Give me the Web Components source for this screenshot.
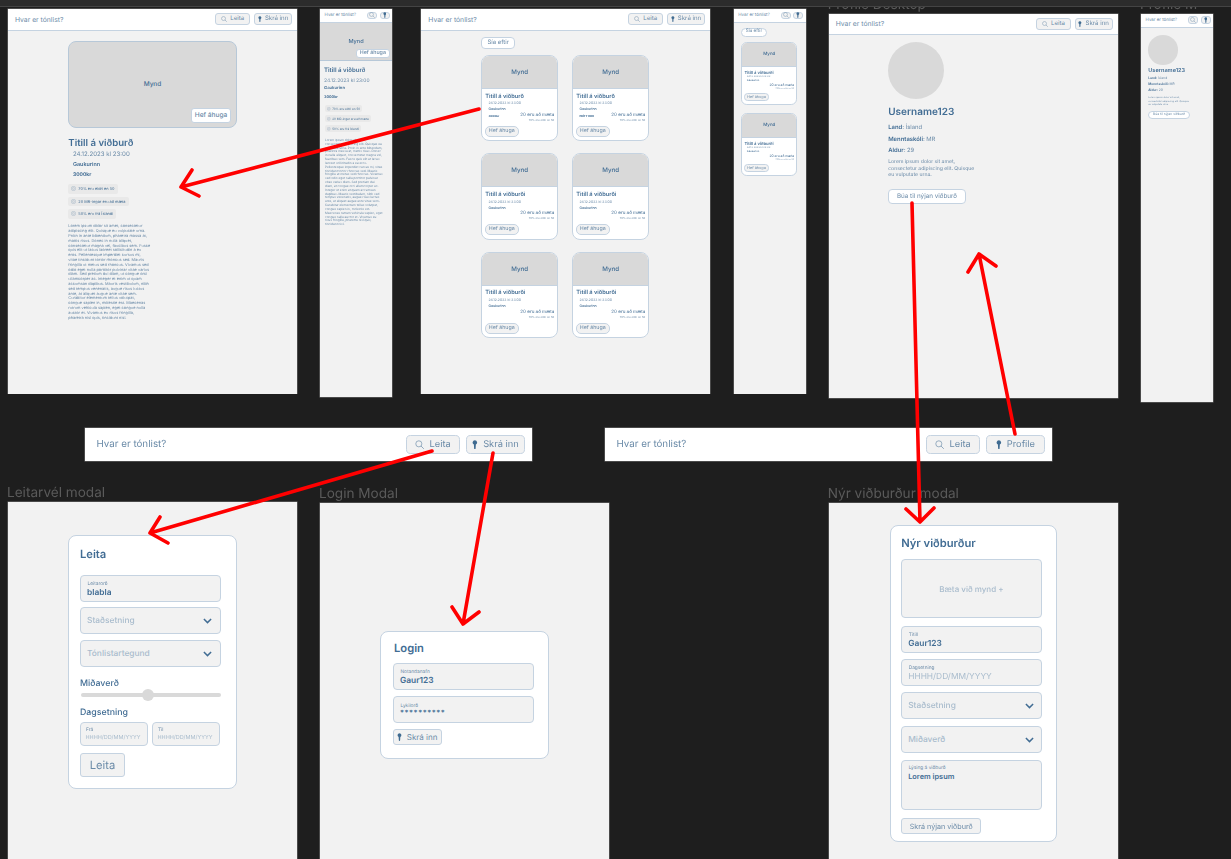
<!DOCTYPE html>
<html lang="is"><head><meta charset="utf-8"><title>Hvar er tónlist?</title>
<style>html,body{margin:0;padding:0;height:859px;overflow:hidden;background:#1e1e1e}</style></head>
<body>
<app-canvas>
  <ui-frame x="8" y="9" w="289" h="384.5"><ui-nav login></ui-nav><event-detail></event-detail></ui-frame>
  <ui-frame x="320" y="9" w="72" h="388"><ui-nav compact></ui-nav><event-detail mobile></event-detail></ui-frame>

  <ui-frame x="421.3" y="9" w="288.7" h="384.5"><ui-nav login></ui-nav>
    <event-grid>
      <event-card title-text="Titill á viðburð" date="24.12.2023 kl 23:00" price="3000kr"></event-card>
      <event-card title-text="Titill á viðburð" date="24.12.2023 kl 23:00" price="FRÍTT INN"></event-card>
      <event-card title-text="Titill á viðburði" date="24.12.2023 kl 23:00"></event-card>
      <event-card title-text="Titill á viðburði" date="24.12.2023 kl 23:00"></event-card>
      <event-card title-text="Titill á viðburði" date="24.12.2023 kl 23:00"></event-card>
      <event-card title-text="Titill á viðburði" date="24.12.2023 kl 23:00"></event-card>
    </event-grid>
  </ui-frame>
  <ui-frame x="733.7" y="9" w="72" h="384.5"><ui-nav compact></ui-nav>
    <event-grid mobile>
      <event-card title-text="Titill á viðburði" date="24.12.2023 kl 23:00" style="--u:.725"></event-card>
      <event-card title-text="Titill á viðburði" date="24.12.2023 kl 23:00" style="--u:.725"></event-card>
    </event-grid>
  </ui-frame>

  <ui-frame x="828.7" y="13.7" w="289" h="384.5" label="Profile Desktop"><ui-nav login></ui-nav><profile-view></profile-view></ui-frame>
  <ui-frame x="1141" y="13.7" w="72" h="388" label="Profile M"><ui-nav compact></ui-nav><profile-view mobile></profile-view></ui-frame>

  <ui-frame x="85" y="428" w="447" h="33"><ui-nav wide login></ui-nav></ui-frame>
  <ui-frame x="605" y="428" w="447" h="33"><ui-nav wide></ui-nav></ui-frame>

  <ui-frame x="8" y="502" w="289" h="370" label="Leitarvél modal">
    <ui-modal style="margin:32.7px 0 0 60px;width:168.5px;height:254.5px;padding:11.3px 0 0 11px">
      <modal-title>Leita</modal-title>
      <ui-field label="Leitarorð" value="blabla" style="margin-top:14px"></ui-field>
      <ui-field placeholder="Staðsetning" select style="margin-top:5px"></ui-field>
      <ui-field placeholder="Tónlistartegund" select style="margin-top:6px"></ui-field>
      <section-label style="margin-top:11px">Miðaverð</section-label>
      <ui-slider style="margin-top:-.5px"></ui-slider>
      <section-label style="margin-top:6px">Dagsetning</section-label>
      <date-range style="margin-top:2.5px"></date-range>
      <ui-btn style="margin-top:7.5px;width:45px;height:24px;font-size:11.2px">Leita</ui-btn>
    </ui-modal>
  </ui-frame>

  <ui-frame x="320" y="503.3" w="289" h="370" label="Login Modal">
    <ui-modal style="margin:127.5px 0 0 60px;width:169px;height:128.3px;padding:9px 0 0 12px">
      <modal-title style="margin-left:1px">Login</modal-title>
      <ui-field label="Notandanafn" value="Gaur123" style="margin-top:8px"></ui-field>
      <ui-field label="Lykilorð" value="**********" secret style="margin-top:6px"></ui-field>
      <ui-btn icon="key" style="margin-top:6px;width:49px;height:16px;font-size:8px">Skrá inn</ui-btn>
    </ui-modal>
  </ui-frame>

  <ui-frame x="828.7" y="503.3" w="289" h="370" label="Nýr viðburður modal">
    <ui-modal style="margin:21.4px 0 0 61px;width:167.3px;height:317.5px;padding:10.5px 0 0 10.5px">
      <modal-title>Nýr viðburður</modal-title>
      <upload-box style="margin-top:9px">Bæta við mynd +</upload-box>
      <ui-field label="Titill" value="Gaur123" style="margin-top:8px"></ui-field>
      <ui-field label="Dagsetning" placeholder="HHHH/DD/MM/YYYY" style="margin-top:6px"></ui-field>
      <ui-field placeholder="Staðsetning" select style="margin-top:6px"></ui-field>
      <ui-field placeholder="Miðaverð" select style="margin-top:7px"></ui-field>
      <ui-field label="Lýsing á viðburð" value="Lorem ipsum" area style="margin-top:7px"></ui-field>
      <ui-btn style="margin-top:8px;width:80px;height:16px;font-size:7.2px">Skrá nýjan viðburð</ui-btn>
    </ui-modal>
  </ui-frame>

  <arrow-layer></arrow-layer>
</app-canvas>
<script>
const INK='#426d94', SOFT='#6b8ba8', PALE='#a9bccd', LINE='#c5d3e1', BG='#f2f2f2', GREY='#d9d9d9';
const u=n=>`calc(var(--u,1)*${n}px)`;
const def=(name,css,render)=>customElements.define(name,class extends HTMLElement{
  connectedCallback(){
    if(this.shadowRoot) return;
    const r=this.attachShadow({mode:'open'});
    r.innerHTML=`<style>${css}</style>`+render(this);
  }
});
const ICONS={
  search:`<svg viewBox="0 0 14 14" width="1em" height="1em" style="flex:none"><circle cx="5.8" cy="5.8" r="4.6" fill="none" stroke="${SOFT}" stroke-width="1"/><path d="M9.2 9.2L13.3 13.3" stroke="${SOFT}" stroke-width="1.1" fill="none"/></svg>`,
  key:`<svg viewBox="0 0 10 16" width=".62em" height="1em" style="flex:none"><path d="M5 .4a3.9 3.9 0 0 1 1.7 7.4L6.3 14.6a1.3 1.3 0 0 1-2.6 0L3.3 7.8A3.9 3.9 0 0 1 5 .4z" fill="#3f6b91"/></svg>`
};
const CHEV=`<svg viewBox="0 0 12 8" width="9" height="6"><path d="M1.2 1.4L6 6.2L10.8 1.4" fill="none" stroke="${INK}" stroke-width="2"/></svg>`;
const LINES=["Lorem ipsum dolor sit amet, consectetur","adipiscing elit. Quisque eu vulputate urna.","Proin in ante bibendum, pharetra massa at,","mattis risus. Donec in nulla aliquet,","consectetur magna vel, faucibus sem. Fusce","quis elit ut lacus laoreet sollicitudin a eu","eros. Pellentesque imperdiet cursus mi,","vitae tincidunt tortor rhoncus sed. Mauris","fringilla ut metus sed rhoncus. Vivamus sed","odio eget nulla porttitor pulvinar vitae varius","diam. Sed pretium dui diam, ut congue orci","ullamcorper ac. Integer et enim ut quam","accumsan dapibus. Mauris vestibulum, nibh","sed tempus venenatis, augue risus luctus","ante, at aliquet augue ante vitae sem.","Curabitur elementum tellus volutpat,","congue sapien in, molestie est. Maecenas","rutrum vehicula sapien, eget congue nulla","auctor et. Vivamus eu risus fringilla,","pharetra nisl quis, tincidunt nisl."];

def('app-canvas',`:host{display:block;position:relative;width:1231px;height:859px;overflow:hidden;background:#1e1e1e;
  font-family:Inter,"Noto Sans",sans-serif;text-rendering:geometricPrecision;color:${INK}}
  .bar{height:6px;background:#2c2c2c;border-bottom:1px solid #444;position:relative;z-index:4}`,
  ()=>`<div class="bar"></div><slot></slot>`);

def('ui-frame',`:host{position:absolute;display:flex;flex-direction:column;background:${BG};box-shadow:0 0 0 .5px #777;filter:blur(.3px)}
  .label{position:absolute;bottom:100%;left:-1px;white-space:nowrap;font-size:13.6px;line-height:18px;color:#5a5a5a}`,
  h=>{const a=k=>h.getAttribute(k);
    Object.assign(h.style,{left:a('x')+'px',top:a('y')+'px',width:a('w')+'px',height:a('h')+'px'});
    return (a('label')?`<div class="label">${a('label')}</div>`:'')+`<slot></slot>`;});

def('ui-btn',`:host{display:flex;align-items:center;justify-content:center;gap:.55em;box-sizing:border-box;flex:none;
    background:var(--bg,${BG});border:1px solid ${LINE};border-radius:var(--r,3px);color:${SOFT};white-space:nowrap;line-height:1}`,
  h=>{const i=h.getAttribute('icon');return (i?ICONS[i]:'')+`<slot></slot>`;});

def('ui-nav',`:host{display:flex;align-items:center;flex:none;box-sizing:border-box;--u:1;height:${u(21.5)};background:#fff;
    border-bottom:1px solid ${LINE};padding:0 ${u(5)} 0 ${u(7)};gap:${u(4)}}
  :host([wide]){--u:1.52;border-bottom:0;padding-left:11.5px;padding-right:7px;height:100%}
  :host([compact]){--u:.65;padding-left:4.6px;padding-right:2.5px}
  .t{flex:1;font-size:${u(6.8)};color:${SOFT};white-space:nowrap}
  :host([wide]) .t{font-size:9.8px}
  ui-btn{height:${u(12.2)};font-size:${u(6.1)};--r:${u(3)}}
  .s{width:${u(35)}} .k{width:${u(38)}}
  :host([wide]) .s{width:54px} :host([wide]) .k{width:59px}
  :host([compact]) ui-btn{width:${u(15.4)};--r:3px;font-size:6px}`,
  h=>{const c=h.hasAttribute('compact'),l=h.hasAttribute('login');
    return `<div class="t">Hvar er tónlist?</div><ui-btn class="s" icon="search">${c?'':'Leita'}</ui-btn><ui-btn class="k" icon="key">${c?'':(l?'Skrá inn':'Profile')}</ui-btn>`;});

def('ui-chip',`:host{display:inline-flex;align-items:center;gap:var(--cg,2px);height:var(--ch,9.5px);padding:0 var(--cp,3px);background:#e9e9e9;border-radius:2px;font-size:var(--cf,3.9px);color:${INK};white-space:nowrap;align-self:flex-start}
  svg{width:var(--ci,5px);height:var(--ci,5px);flex:none}`,
  ()=>`<svg viewBox="0 0 10 10"><circle cx="5" cy="5" r="4.3" fill="none" stroke="#8ea6bb" stroke-width=".8"/><circle cx="5" cy="5" r="1.8" fill="none" stroke="#8ea6bb" stroke-width=".7"/></svg><slot></slot>`);

def('event-detail',`:host{display:block;padding:10.5px 0 0 60.3px}
  .img{position:relative;box-sizing:border-box;width:168.4px;height:86.5px;border:1px solid #b7c8d8;border-radius:8px;background:${GREY};display:flex;align-items:center;justify-content:center;font-size:6.5px;font-weight:500}
  ui-btn{position:absolute;right:4.4px;bottom:3.8px;width:40.6px;height:14.4px;font-size:6.6px;--bg:#fff}
  h2{margin:10px 0 0;font-size:9.6px;line-height:12px;font-weight:600;white-space:nowrap}
  .d{margin:1.5px 0 0 4.7px;font-size:6.1px;line-height:8px;color:${SOFT}}
  .v{margin:3px 0 0 4.7px;font-size:5.4px;line-height:6px;font-weight:600}
  .p{margin:3.5px 0 0 4.7px;font-size:5px;line-height:6px;font-weight:700}
  .c{display:flex;flex-direction:column;gap:3px;margin-top:6.5px}
  .l{margin:5.8px 0 0;width:90px;font-size:3.9px;line-height:4.82px;color:${SOFT}}
  :host([mobile]){padding:0}
  :host([mobile]) .img{width:100%;height:38.5px;border-width:0 0 1px;border-radius:0;font-size:5.6px}
  :host([mobile]) ui-btn{right:2px;bottom:2.2px;width:34.3px;height:9.3px;font-size:5.3px}
  :host([mobile]) h2{margin:5.7px 0 0 4px;font-size:6.1px;line-height:7px}
  :host([mobile]) .d{margin:4.8px 0 0 4px;font-size:4.9px;line-height:5px}
  :host([mobile]) .v{margin:3px 0 0 4px;font-size:4.2px;line-height:4px}
  :host([mobile]) .p{margin:4px 0 0 4px;font-size:3.8px;line-height:4px}
  :host([mobile]) .c{margin:6.5px 0 0 5px;--ch:7px;--cf:3px;--ci:3.6px;--cp:2px;--cg:1.6px}
  :host([mobile]) .l{margin:6.5px 0 0 5px;width:58px;font-size:3.1px;line-height:3.83px}`,
  h=>`<div class="img">Mynd<ui-btn>Hef áhuga</ui-btn></div>
  <h2>Titill á viðburð</h2><div class="d">24.12.2023 kl 23:00</div><div class="v">Gaukurinn</div><div class="p">3000kr</div>
  <div class="c"><ui-chip>70% eru eldri en 50</ui-chip><ui-chip>20 MR-ingar eru að mæta</ui-chip><ui-chip>50% eru frá Íslandi</ui-chip></div>
  <p class="l">${LINES.join(h.hasAttribute('mobile')?' ':'<br>')}</p>`);

def('event-grid',`:host{display:block;padding:6.8px 0 0 59.7px}
  .g{display:grid;grid-template-columns:77.5px 77.5px;column-gap:13.5px;row-gap:11.9px;margin-top:6px}
  ui-btn{width:34.5px;height:11.7px;font-size:6px;--bg:#fff;--r:4px}
  :host([mobile]){padding:5px 0 0 7.5px}
  :host([mobile]) .g{grid-template-columns:56.2px;row-gap:8.4px;margin-top:4.5px}
  :host([mobile]) ui-btn{width:25.5px;height:9.5px;font-size:4.6px;--r:5px}`,
  ()=>`<ui-btn>Sía eftir</ui-btn><div class="g"><slot></slot></div>`);

def('event-card',`:host{display:flex;flex-direction:column;box-sizing:border-box;width:${u(77.5)};height:${u(86.4)};background:#fff;border:1px solid ${LINE};border-radius:${u(8)};overflow:hidden}
  .img{height:${u(33)};flex:none;background:${GREY};display:flex;align-items:center;justify-content:center;font-size:${u(6.2)};font-weight:500;border-bottom:1px solid ${LINE};box-sizing:border-box;padding-top:${u(1)}}
  h3{margin:${u(3.6)} 0 0 ${u(3.2)};font-size:${u(5.7)};line-height:${u(7)};font-weight:600;white-space:nowrap}
  .d{margin:${u(1.7)} 0 0 ${u(6.4)};font-size:${u(3.5)};line-height:${u(4)};color:${SOFT}}
  .v{margin:${u(2.2)} 0 0 ${u(6.4)};font-size:${u(3.5)};line-height:${u(4)};font-weight:500}
  .r{display:flex;justify-content:space-between;margin:${u(1.6)} ${u(3.2)} 0 ${u(6.4)}}
  .p{margin-top:${u(1.2)};font-size:${u(2.9)};line-height:${u(4)};font-weight:800}
  .m{text-align:right;font-size:${u(4.55)};line-height:${u(5)};white-space:nowrap}
  .m small{display:block;font-size:${u(2.75)};line-height:${u(5)};color:${SOFT}}
  ui-btn{margin:auto 0 ${u(3.2)} ${u(2.7)};width:${u(34)};height:${u(11)};font-size:${u(5.3)};--r:${u(5)}}`,
  h=>`<div class="img">Mynd</div><h3>${h.getAttribute('title-text')}</h3><div class="d">${h.getAttribute('date')}</div><div class="v">Gaukurinn</div>
  <div class="r"><div class="p">${h.getAttribute('price')||''}</div><div class="m">20 eru að mæta<small>70% eru eldri en 50</small></div></div>
  <ui-btn>Hef áhuga</ui-btn>`);

def('profile-view',`:host{display:block;padding:6.5px 0 0 59.5px;--u:1}
  :host([mobile]){--u:.56;padding:7.3px 0 0 7.2px}
  .a{width:56px;height:57px;border-radius:50%;background:${GREY}}
  h2{margin:7.5px 0 0;font-size:${u(10)};line-height:${u(12)};font-weight:600}
  .f{margin-top:6.2px;font-size:${u(5.9)};line-height:7px;font-weight:600}
  .f+.f{margin-top:4.5px} .f span{font-weight:400;color:${SOFT}}
  p{margin:5px 0 0;font-size:5.1px;line-height:6.4px;color:${SOFT};white-space:nowrap}
  ui-btn{margin-top:10.3px;width:77.5px;height:15.2px;font-size:6.3px;--bg:#fff;--r:4px}
  :host([mobile]) .a{width:29.7px;height:29.7px}
  :host([mobile]) h2{margin-top:2.9px}
  :host([mobile]) .f{margin-top:3px;line-height:3.4px}
  :host([mobile]) .f+.f{margin-top:2.5px}
  :host([mobile]) p{font-size:2.42px;line-height:3.75px;margin-top:3.3px}
  :host([mobile]) ui-btn{margin-top:3.5px;width:41.7px;height:8.5px;font-size:3.36px}`,
  ()=>`<div class="a"></div><h2>Username123</h2>
  <div class="f">Land: <span>Ísland</span></div><div class="f">Menntaskóli: <span>MR</span></div><div class="f">Aldur: <span>29</span></div>
  <p>Lorem ipsum dolor sit amet,<br>consectetur adipiscing elit. Quisque<br>eu vulputate urna.</p>
  <ui-btn>Búa til nýjan viðburð</ui-btn>`);

def('ui-modal',`:host{display:block;box-sizing:border-box;background:#fff;border:1px solid ${LINE};border-radius:8px}`,()=>`<slot></slot>`);
def('modal-title',`:host{display:block;font-size:11.2px;line-height:14px;font-weight:600;white-space:nowrap}`,()=>`<slot></slot>`);
def('section-label',`:host{display:block;font-size:8.8px;line-height:12px;font-weight:500;white-space:nowrap}`,()=>`<slot></slot>`);

def('ui-field',`:host{display:flex;box-sizing:border-box;width:var(--w,140.5px);height:var(--fh,27px);background:${BG};border:1px solid ${LINE};border-radius:4px;padding:0 var(--fp,6px);position:relative}
  :host([area]){height:50px}
  .col{flex:1;min-width:0;display:flex;flex-direction:column;justify-content:center;padding-top:1.5px}
  :host([area]) .col{justify-content:flex-start;padding-top:3.8px}
  .lab{font-size:var(--lf,4.8px);line-height:var(--ll,7px);color:${SOFT};white-space:nowrap;padding-left:.5px}
  .val{font-size:var(--vf,8.4px);line-height:var(--vl,10px);font-weight:600;color:${INK};white-space:nowrap}
  :host([area]) .val{font-size:7.4px;line-height:9px}
  :host([secret]) .val{letter-spacing:.55px;font-size:7.4px;line-height:6px;padding-bottom:2px}
  .ph{font-size:var(--vf,8.4px);line-height:var(--vl,10px);color:${PALE};white-space:nowrap}
  :host([select]) .ph{font-weight:500}
  .ch{align-self:center;margin:1px 1.2px 0 4px;display:flex}`,
  h=>{const a=k=>h.getAttribute(k);
    return `<div class="col">${a('label')?`<div class="lab">${a('label')}</div>`:''}${a('value')?`<div class="val">${a('value')}</div>`:''}${a('placeholder')?`<div class="ph">${a('placeholder')}</div>`:''}</div>${h.hasAttribute('select')?`<div class="ch">${CHEV}</div>`:''}`;});

def('ui-slider',`:host{display:block;position:relative;width:140px;height:12px;margin-left:1px}
  .t{position:absolute;left:0;right:0;top:4px;height:4px;border-radius:2px;background:${GREY}}
  .k{position:absolute;left:60.5px;top:0;width:12px;height:12px;border-radius:50%;background:${GREY}}`,
  ()=>`<div class="t"></div><div class="k"></div>`);

def('date-range',`:host{display:grid;grid-template-columns:68px 68px;column-gap:4px;--fh:24px;--w:68px;--lf:4.8px;--ll:7px;--vf:5.5px;--vl:8px;--fp:4.5px}`,
  ()=>`<ui-field label="Frá" placeholder="HHHH/DD/MM/YYYY"></ui-field><ui-field label="Til" placeholder="HHHH/DD/MM/YYYY"></ui-field>`);

def('upload-box',`:host{display:flex;align-items:center;justify-content:center;box-sizing:border-box;width:140.5px;height:59px;background:${BG};border:1px solid ${LINE};border-radius:4px;font-size:8px;font-weight:500;color:${PALE}}`,()=>`<slot></slot>`);

def('arrow-layer',`:host{position:absolute;inset:0;pointer-events:none;z-index:3}
  svg{display:block;width:100%;height:100%} path{fill:none;stroke:#f00;stroke-width:3.6;stroke-linecap:round;stroke-linejoin:round}`,
  ()=>`<svg viewBox="0 0 1231 859"><path d="M479 109L181 187M192 170L181 187L199 196"/><path d="M432 451L150 533M160 517L150 533L168 543"/><path d="M493 453L463 624M452 607L463 624L479 612"/><path d="M912 203L920 522M906 509L920 522L934 508"/><path d="M1015 434L979 254M968 272L979 254L996 266"/></svg>`);
</script>
</body></html>
